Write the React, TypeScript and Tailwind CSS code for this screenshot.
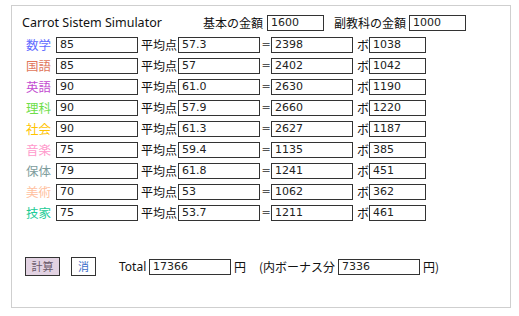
const subjects = [
  { name: "数学", color: "text-[#5f6cff]", score: "85", avg: "57.3", total: "2398", bonus: "1038" },
  { name: "国語", color: "text-[#e0765a]", score: "85", avg: "57", total: "2402", bonus: "1042" },
  { name: "英語", color: "text-[#c34bd0]", score: "90", avg: "61.0", total: "2630", bonus: "1190" },
  { name: "理科", color: "text-[#6ede4a]", score: "90", avg: "57.9", total: "2660", bonus: "1220" },
  { name: "社会", color: "text-[#ffc400]", score: "90", avg: "61.3", total: "2627", bonus: "1187" },
  { name: "音楽", color: "text-[#ff99cc]", score: "75", avg: "59.4", total: "1135", bonus: "385" },
  { name: "保体", color: "text-[#7d9c9c]", score: "79", avg: "61.8", total: "1241", bonus: "451" },
  { name: "美術", color: "text-[#ffbf9e]", score: "70", avg: "53", total: "1062", bonus: "362" },
  { name: "技家", color: "text-[#20cc96]", score: "75", avg: "53.7", total: "1211", bonus: "461" },
];

const jp = "font-['Noto_Sans_CJK_JP',sans-serif]";

const Box = ({ value, wide = true }: { value: string; wide?: boolean }) => (
  <div
    className={`${wide ? "w-[82px]" : "w-[57px]"} h-[16px] border border-[#333] bg-white pl-[3px] text-[11px] leading-[14px] text-[#222] font-['DejaVu_Sans',sans-serif] shrink-0`}
  >
    {value}
  </div>
);

const App = () => {
  return (
    <div className="bg-white w-[519px] h-[316px] pt-[5px] pl-[11px]">
      <div className={`w-[500px] h-[303px] border border-[#cfcfcf] ${jp} text-[12px] text-[#111] whitespace-nowrap`}>
        {/* header */}
        <div className="flex items-center h-[16px] mt-[9px]">
          <span className="ml-[10px] w-[181px] shrink-0 text-[12.5px] font-['Noto_Sans',sans-serif]">
            Carrot Sistem Simulator
          </span>
          <span className="w-[64px] shrink-0">基本の金額</span>
          <Box value="1600" wide={false} />
          <span className="ml-[10px] w-[75px] shrink-0">副教科の金額</span>
          <Box value="1000" wide={false} />
        </div>

        {/* subject rows */}
        <div className="flex flex-col gap-[5px] mt-[6px] pl-[14px]">
          {subjects.map((s) => (
            <div key={s.name} className="flex items-center h-[16px]">
              <span className={`w-[30px] shrink-0 text-[12.5px] ${s.color}`}>{s.name}</span>
              <Box value={s.score} />
              <span className="ml-[3px] w-[37px] shrink-0">平均点</span>
              <Box value={s.avg} />
              <span className="ml-[1px] w-[10px] shrink-0 text-center text-[11px] text-[#555] font-['DejaVu_Sans',sans-serif]">=</span>
              <Box value={s.total} />
              <span className="ml-[4px] w-[12px] shrink-0">ボ</span>
              <Box value={s.bonus} wide={false} />
            </div>
          ))}
        </div>

        {/* footer */}
        <div className="flex items-center h-[19px] mt-[36px] pl-[13px]">
          <button className="w-[35px] h-[19px] shrink-0 border border-[#333] bg-[#e2d2e2] text-[11px] text-[#6a5a6a]">
            計算
          </button>
          <button className="ml-[11px] w-[25px] h-[19px] shrink-0 border border-[#333] bg-white text-[11px] text-[#3a6cc8]">
            消
          </button>
          <span className="ml-[23px] w-[30px] shrink-0 text-[12px] font-['Noto_Sans',sans-serif]">Total</span>
          <Box value="17366" />
          <span className="ml-[3px] w-[25px] shrink-0">円</span>
          <span className="w-[79px] shrink-0">(内ボーナス分</span>
          <Box value="7336" />
          <span className="ml-[3px] shrink-0">円)</span>
        </div>
      </div>
    </div>
  );
};

export default App;
